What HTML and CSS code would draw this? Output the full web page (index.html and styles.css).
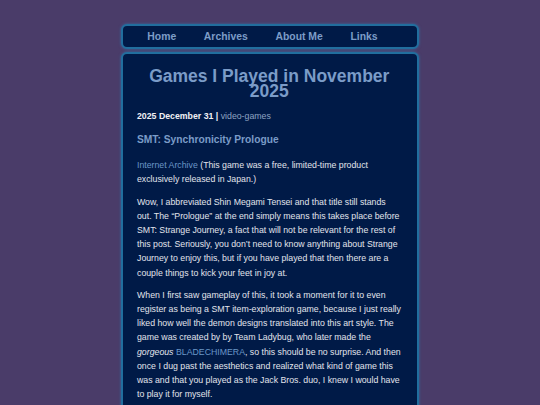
FILE: index.html
```html
<!DOCTYPE html>
<html lang="en">
<head>
<meta charset="utf-8">
<title>Games I Played in November 2025</title>
<link rel="stylesheet" href="styles.css">
</head>
<body>
<div class="page">
  <nav class="nav">
    <a href="#" class="nav-link">Home</a>
    <a href="#" class="nav-link">Archives</a>
    <a href="#" class="nav-link">About Me</a>
    <a href="#" class="nav-link">Links</a>
  </nav>
  <main class="post">
    <h1 class="post-title">Games I Played in November 2025</h1>
    <p class="meta"><strong>2025 December 31 |</strong> <a href="#" class="tag">video-games</a></p>
    <h3 class="section">SMT: Synchronicity Prologue</h3>
    <p class="para"><a href="#" class="link">Internet Archive</a> (This game was a free, limited-time product exclusively released in Japan.)</p>
    <p class="para">Wow, I abbreviated Shin Megami Tensei and that title still stands out. The “Prologue” at the end simply means this takes place before SMT: Strange Journey, a fact that will not be relevant for the rest of this post. Seriously, you don’t need to know anything about Strange Journey to enjoy this, but if you have played that then there are a couple things to kick your feet in joy at.</p>
    <p class="para">When I first saw gameplay of this, it took a moment for it to even register as being a SMT item-exploration game, because I just really liked how well the demon designs translated into this art style. The game was created by by Team Ladybug, who later made the <em>gorgeous</em> <a href="#" class="link">BLADECHIMERA</a>, so this should be no surprise. And then once I dug past the aesthetics and realized what kind of game this was and that you played as the Jack Bros. duo, I knew I would have to play it for myself.</p>
  </main>
</div>
</body>
</html>
```
FILE: styles.css
```css
html, body {
  margin: 0;
  padding: 0;
}
body {
  background: #4a3c69;
  font-family: "Liberation Sans", Arial, sans-serif;
  font-size: 8.75px;
  line-height: 14.2px;
  color: #e2e4ec;
  overflow: hidden;
  height: 405px;
}
.page {
  width: 298px;
  margin: 0 auto;
  padding-top: 24px;
  display: flex;
  flex-direction: column;
  gap: 3px;
}
.nav {
  height: 20px;
  padding-top: 1px;
  border: 2px solid #216e9e;
  border-radius: 6px;
  background: #001a47;
  box-shadow: 0 0 3px rgba(40, 140, 200, 0.6);
  display: flex;
  align-items: center;
  gap: 27.7px;
  padding-left: 24.3px;
}
.nav-link {
  font-size: 10.4px;
  font-weight: bold;
  color: #7d9dc8;
  text-decoration: none;
  line-height: 20px;
}
.post {
  border: 2px solid #216e9e;
  border-radius: 6px;
  background: #001a47;
  box-shadow: 0 0 3px rgba(40, 140, 200, 0.6);
  padding: 14.6px 15.5px 20px 14px;
  min-height: 400px;
}
.post-title {
  margin: 0 0 10px;
  font-size: 17.5px;
  line-height: 15px;
  text-align: center;
  color: #7b9cc8;
  font-weight: bold;
}
.meta {
  margin: 0 0 10.5px;
}
.meta strong {
  color: #f0f0f4;
}
.tag {
  color: #8ea3c2;
  text-decoration: none;
}
.section {
  margin: 0 0 10.6px;
  font-size: 10.24px;
  line-height: 14.2px;
  color: #7b9cc8;
  font-weight: bold;
}
.para {
  margin: 0 0 8px;
}
.link {
  color: #6b97c8;
  text-decoration: none;
}
```
